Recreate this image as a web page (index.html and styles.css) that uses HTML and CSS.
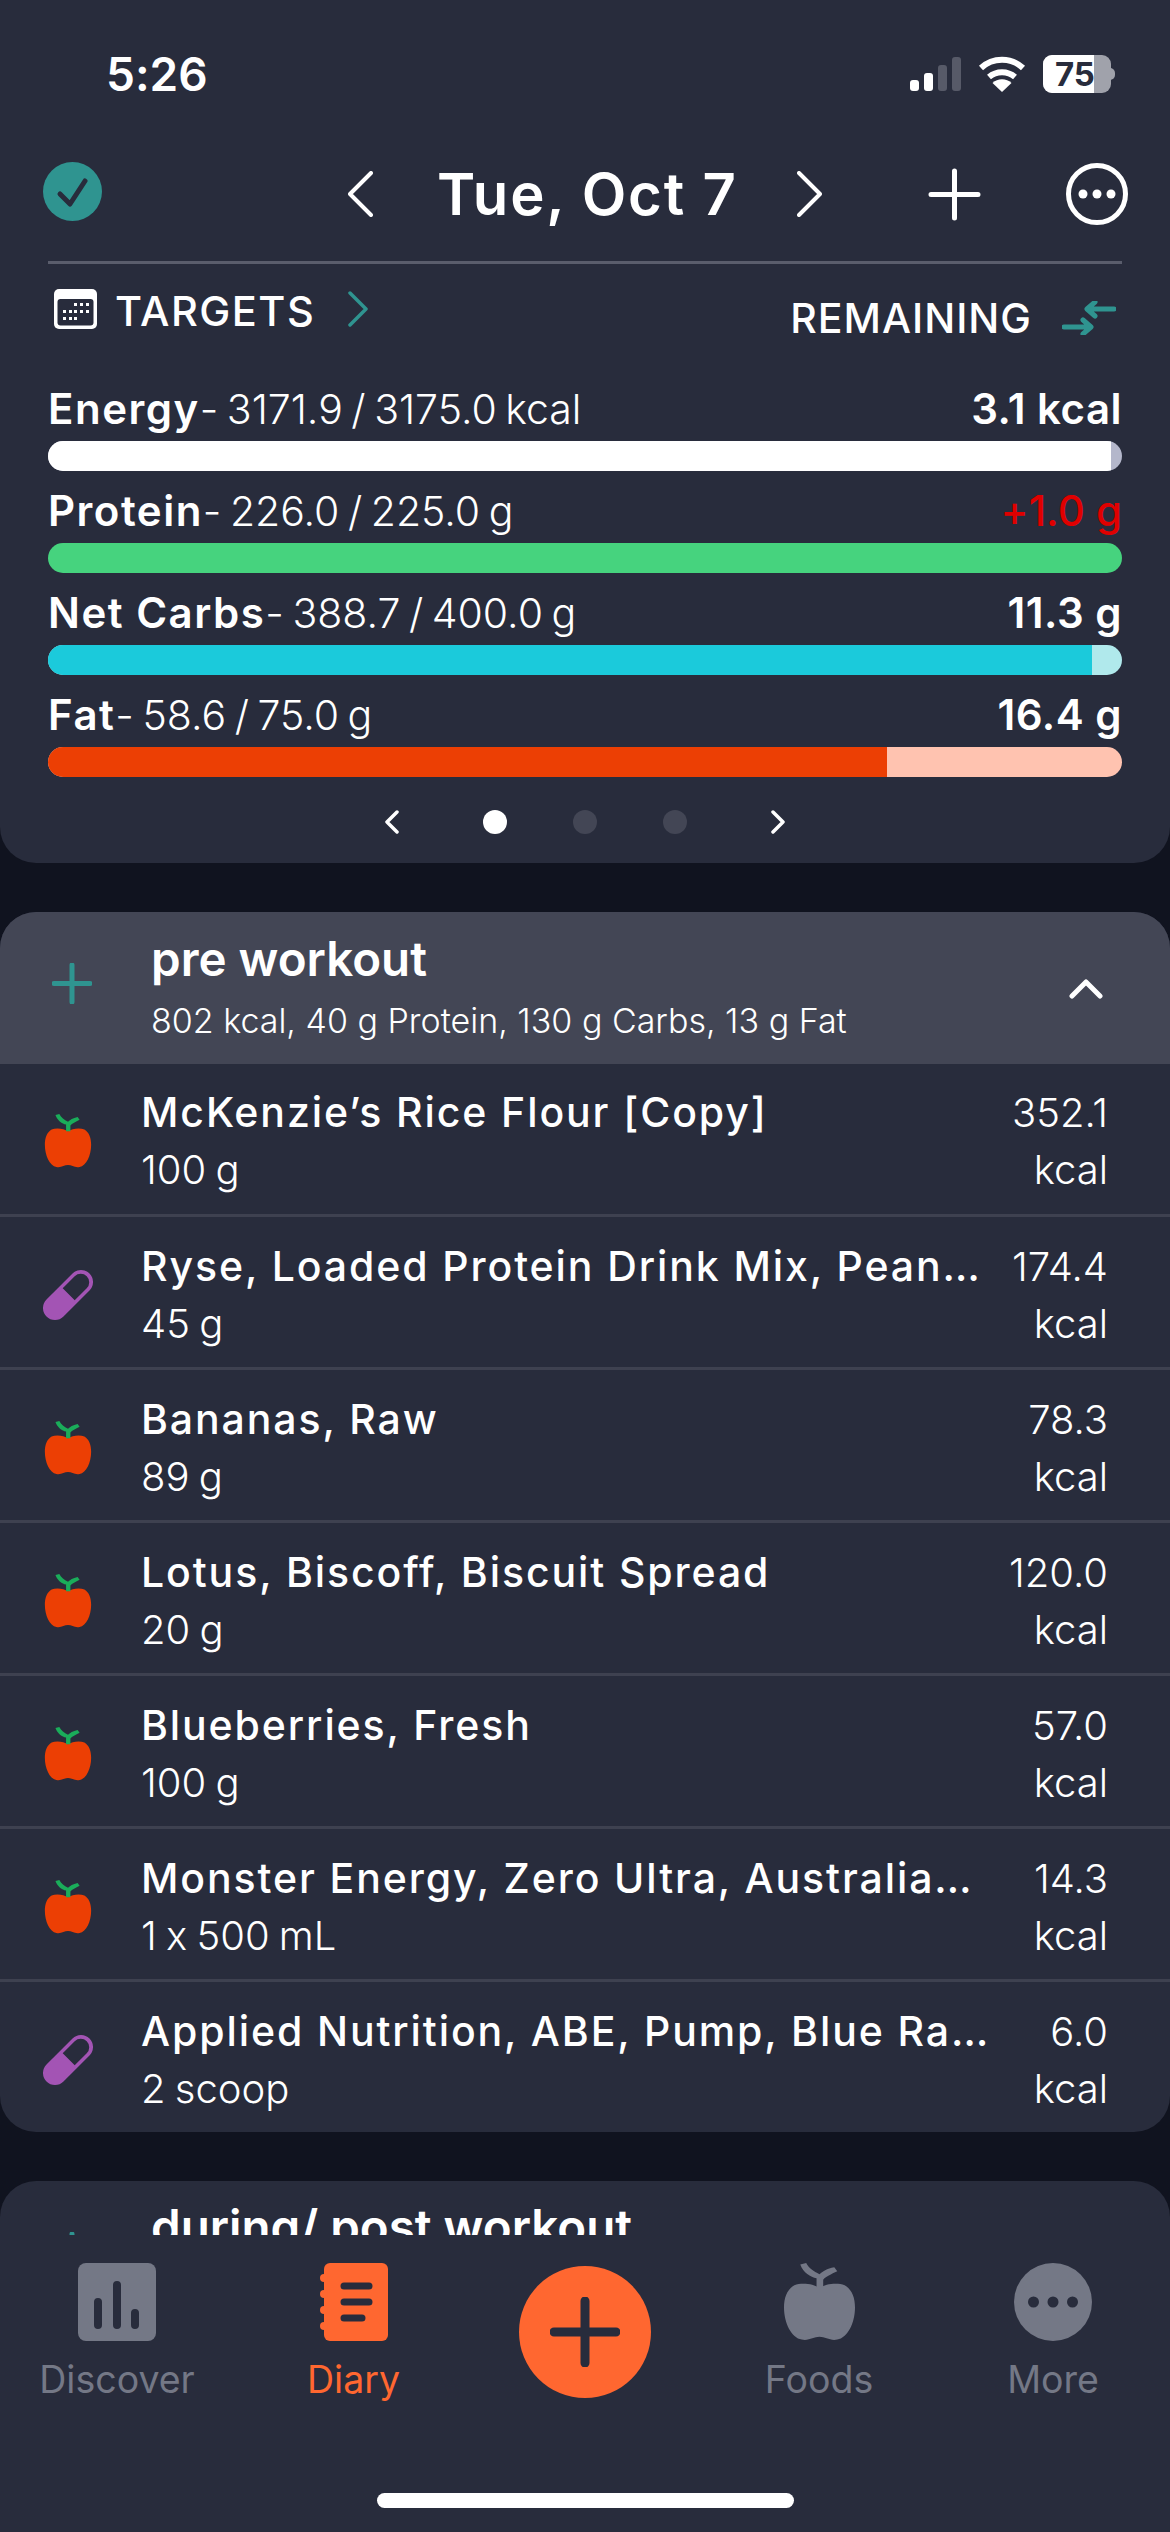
FILE: index.html
```html
<!DOCTYPE html>
<html lang="en">
<head>
    <meta charset="UTF-8">
    <meta name="viewport" content="width=device-width, initial-scale=1.0">
    <title>Diary</title>
    <link rel="stylesheet" href="styles.css">
</head>
<body>
    <svg class="defs" width="0" height="0">
        <symbol id="apple" viewBox="0 0 48 56">
            <path class="apple-body" d="M24 18C20 15 12 14 7 16C2 19 0 25 0 32C0 43 5 54 12 55C17 56 20 53 24 53C28 53 31 56 36 55C43 54 48 43 48 32C48 25 46 19 41 16C36 14 28 15 24 18Z"/>
            <path class="apple-leaf" d="M22 18L22 11C18 10 13 7 11 1L15 0C17 4 20 6 24 8C26 6 29 4 34 3L36 6C32 8 28 10 26.500 12L26.500 18Z"/>
        </symbol>
        <symbol id="pill" viewBox="0 0 50 50">
            <g transform="rotate(-45 25 25)">
                <rect x="-5.400" y="13" width="60.800" height="24" rx="12" fill="#a354b4"/>
                <path d="M26 16.500H43a8.500 8.500 0 0 1 0 17H26Z" fill="#282c3c"/>
            </g>
        </symbol>
    </svg>

    <div class="screen">
        <div class="top-card">
            <div class="status">
                <span class="clock">5:26</span>
                <div class="status-icons">
                    <svg width="51" height="34" viewBox="0 0 51 34">
                        <rect x="0" y="23" width="9" height="11" rx="3" fill="#fff"/>
                        <rect x="14" y="16" width="9" height="18" rx="3" fill="#fff"/>
                        <rect x="28" y="8" width="9" height="26" rx="3" fill="#575a68"/>
                        <rect x="42" y="0" width="9" height="34" rx="3" fill="#575a68"/>
                    </svg>
                    <svg class="wifi" width="48" height="36" viewBox="0 0 48 36">
                        <path d="M3 12A31 31 0 0 1 45 12M11 21A20 20 0 0 1 37 21" fill="none" stroke="#fff" stroke-width="6"/>
                        <path d="M24 36L14.500 27A14 14 0 0 1 33.500 27Z" fill="#fff"/>
                    </svg>
                    <div class="battery"><div class="battery-fill"></div><span class="battery-text">75</span></div>
                    <div class="battery-nub"></div>
                </div>
            </div>

            <div class="nav">
                <svg class="check" width="59" height="59" viewBox="0 0 59 59">
                    <circle cx="29.500" cy="29.500" r="29.500" fill="#2f9490"/>
                    <path d="M17 32L27 42L42 19" fill="none" stroke="#282c3c" stroke-width="5" stroke-linecap="round" stroke-linejoin="round"/>
                </svg>
                <svg class="chev-prev" width="25" height="46" viewBox="0 0 25 46">
                    <path d="M23 2L2 23L23 44" fill="none" stroke="#fff" stroke-width="4" stroke-linecap="round" stroke-linejoin="round"/>
                </svg>
                <span class="date">Tue, Oct 7</span>
                <svg class="chev-next" width="25" height="46" viewBox="0 0 25 46">
                    <path d="M2 2L23 23L2 44" fill="none" stroke="#fff" stroke-width="4" stroke-linecap="round" stroke-linejoin="round"/>
                </svg>
                <svg class="nav-plus" width="53" height="53" viewBox="0 0 53 53">
                    <path d="M26.500 3V50M3 26.500H50" stroke="#fff" stroke-width="5" stroke-linecap="round"/>
                </svg>
                <svg class="nav-more" width="62" height="62" viewBox="0 0 62 62">
                    <circle cx="31" cy="31" r="28.500" fill="none" stroke="#fff" stroke-width="5"/>
                    <circle cx="17" cy="31" r="4.500" fill="#fff"/>
                    <circle cx="31" cy="31" r="4.500" fill="#fff"/>
                    <circle cx="45" cy="31" r="4.500" fill="#fff"/>
                </svg>
            </div>

            <div class="divider"></div>

            <div class="targets">
                <div class="targets-left">
                    <svg width="43" height="40" viewBox="0 0 43 40">
                        <rect width="43" height="40" rx="5" fill="#fff"/>
                        <rect x="3.500" y="10" width="36" height="26.500" rx="3" fill="#282c3c"/>
                        <g fill="#fff">
                            <rect x="20" y="14" width="3" height="3"/><rect x="26" y="14" width="3" height="3"/><rect x="32" y="14" width="3" height="3"/>
                            <rect x="9" y="21" width="3" height="3"/><rect x="15" y="21" width="3" height="3"/><rect x="20" y="21" width="3" height="3"/><rect x="26" y="21" width="3" height="3"/><rect x="32" y="21" width="3" height="3"/>
                            <rect x="9" y="28" width="3" height="3"/><rect x="15" y="28" width="3" height="3"/><rect x="20" y="28" width="3" height="3"/>
                        </g>
                    </svg>
                    <span class="targets-title">TARGETS</span>
                    <svg class="targets-chev" width="20" height="36" viewBox="0 0 20 36">
                        <path d="M2 2L18 18L2 34" fill="none" stroke="#2f9490" stroke-width="3.500" stroke-linecap="round" stroke-linejoin="round"/>
                    </svg>
                </div>
                <div class="targets-right">
                    <span class="targets-title">REMAINING</span>
                    <svg width="54" height="34" viewBox="0 0 54 34">
                        <path d="M2 26H28M21 19L29 26L21 33" fill="none" stroke="#2f9490" stroke-width="5" stroke-linecap="round" stroke-linejoin="round"/>
                        <path d="M52 8H26M33 1L25 8L33 15" fill="none" stroke="#2f9490" stroke-width="5" stroke-linecap="round" stroke-linejoin="round"/>
                    </svg>
                </div>
            </div>

            <div class="macros">
                <div class="macro">
                    <div class="macro-label"><span><b>Energy</b>- 3171.9 / 3175.0 kcal</span><b class="macro-left">3.1 kcal</b></div>
                    <div class="bar track-energy"><div class="bar-fill fill-energy" style="width: 99%"></div></div>
                </div>
                <div class="macro">
                    <div class="macro-label"><span><b>Protein</b>- 226.0 / 225.0 g</span><span class="over">+1.0 g</span></div>
                    <div class="bar"><div class="bar-fill fill-protein" style="width: 100%"></div></div>
                </div>
                <div class="macro">
                    <div class="macro-label"><span><b>Net Carbs</b>- 388.7 / 400.0 g</span><b class="macro-left">11.3 g</b></div>
                    <div class="bar track-carbs"><div class="bar-fill fill-carbs" style="width: 97.2%"></div></div>
                </div>
                <div class="macro">
                    <div class="macro-label"><span><b>Fat</b>- 58.6 / 75.0 g</span><b class="macro-left">16.4 g</b></div>
                    <div class="bar track-fat"><div class="bar-fill fill-fat" style="width: 78.1%"></div></div>
                </div>
            </div>

            <div class="pager">
                <svg class="pager-prev" width="16" height="24" viewBox="0 0 16 24"><path d="M13 2L3 12L13 22" fill="none" stroke="#fff" stroke-width="3.500" stroke-linecap="round" stroke-linejoin="round"/></svg>
                <span class="dot dot-on"></span>
                <span class="dot"></span>
                <span class="dot"></span>
                <svg class="pager-next" width="16" height="24" viewBox="0 0 16 24"><path d="M3 2L13 12L3 22" fill="none" stroke="#fff" stroke-width="3.500" stroke-linecap="round" stroke-linejoin="round"/></svg>
            </div>
        </div>

        <div class="meal">
            <div class="meal-head">
                <svg class="meal-plus" width="40" height="41" viewBox="0 0 40 41"><path d="M20 2V39M2 20.500H38" stroke="#2f9490" stroke-width="5" stroke-linecap="round"/></svg>
                <div class="meal-info">
                    <div class="meal-title">pre workout</div>
                    <div class="meal-sub">802 kcal, 40 g Protein, 130 g Carbs, 13 g Fat</div>
                </div>
                <svg class="meal-chev" width="34" height="21" viewBox="0 0 34 21"><path d="M3 18L17 4L31 18" fill="none" stroke="#fff" stroke-width="5" stroke-linecap="round" stroke-linejoin="round"/></svg>
            </div>

            <div class="food">
                <svg class="food-icon"><use href="#apple"/></svg>
                <div class="food-info"><div class="food-name">McKenzie’s Rice Flour [Copy]</div><div class="food-qty">100 g</div></div>
                <div class="food-cal">352.1<br>kcal</div>
            </div>
            <div class="food">
                <svg class="food-icon"><use href="#pill"/></svg>
                <div class="food-info"><div class="food-name">Ryse, Loaded Protein Drink Mix, Pean…</div><div class="food-qty">45 g</div></div>
                <div class="food-cal">174.4<br>kcal</div>
            </div>
            <div class="food">
                <svg class="food-icon"><use href="#apple"/></svg>
                <div class="food-info"><div class="food-name">Bananas, Raw</div><div class="food-qty">89 g</div></div>
                <div class="food-cal">78.3<br>kcal</div>
            </div>
            <div class="food">
                <svg class="food-icon"><use href="#apple"/></svg>
                <div class="food-info"><div class="food-name">Lotus, Biscoff, Biscuit Spread</div><div class="food-qty">20 g</div></div>
                <div class="food-cal">120.0<br>kcal</div>
            </div>
            <div class="food">
                <svg class="food-icon"><use href="#apple"/></svg>
                <div class="food-info"><div class="food-name">Blueberries, Fresh</div><div class="food-qty">100 g</div></div>
                <div class="food-cal">57.0<br>kcal</div>
            </div>
            <div class="food">
                <svg class="food-icon"><use href="#apple"/></svg>
                <div class="food-info"><div class="food-name">Monster Energy, Zero Ultra, Australia…</div><div class="food-qty">1 x 500 mL</div></div>
                <div class="food-cal">14.3<br>kcal</div>
            </div>
            <div class="food">
                <svg class="food-icon"><use href="#pill"/></svg>
                <div class="food-info"><div class="food-name">Applied Nutrition, ABE, Pump, Blue Ra…</div><div class="food-qty">2 scoop</div></div>
                <div class="food-cal">6.0<br>kcal</div>
            </div>
        </div>

        <div class="meal meal-next">
            <div class="meal-head meal-head-plain">
                <svg class="meal-plus" width="40" height="41" viewBox="0 0 40 41"><path d="M20 2V39M2 20.500H38" stroke="#2f9490" stroke-width="5" stroke-linecap="round"/></svg>
                <div class="meal-info">
                    <div class="meal-title">during/ post workout</div>
                </div>
            </div>
        </div>

        <div class="tabbar">
            <div class="tabs">
                <div class="tab">
                    <svg width="78" height="78" viewBox="0 0 78 78">
                        <rect width="78" height="78" rx="8" fill="#747886"/>
                        <path d="M20 39V62M39 22V62M57 50V62" stroke="#282c3c" stroke-width="8" stroke-linecap="round"/>
                    </svg>
                    <span>Discover</span>
                </div>
                <div class="tab tab-on">
                    <svg width="68" height="78" viewBox="0 0 68 78">
                        <rect x="4" width="64" height="78" rx="6" fill="#ff6730"/>
                        <circle cx="4" cy="15" r="4" fill="#ff6730"/><circle cx="4" cy="31" r="4" fill="#ff6730"/><circle cx="4" cy="47" r="4" fill="#ff6730"/><circle cx="4" cy="63" r="4" fill="#ff6730"/>
                        <path d="M24 23H49M24 39H49M24 55H42" stroke="#282c3c" stroke-width="7" stroke-linecap="round"/>
                    </svg>
                    <span>Diary</span>
                </div>
                <div class="tab">
                    <div class="add-btn">
                        <svg width="70" height="70" viewBox="0 0 70 70"><path d="M35 4V66M4 35H66" stroke="#282c3c" stroke-width="9" stroke-linecap="round"/></svg>
                    </div>
                </div>
                <div class="tab tab-foods">
                    <svg width="71" height="78" viewBox="0 0 48 56" preserveAspectRatio="none"><use href="#apple" width="48" height="56"/></svg>
                    <span>Foods</span>
                </div>
                <div class="tab">
                    <svg width="78" height="78" viewBox="0 0 78 78">
                        <circle cx="39" cy="39" r="39" fill="#747886"/>
                        <circle cx="19.500" cy="39" r="5.500" fill="#282c3c"/><circle cx="39" cy="39" r="5.500" fill="#282c3c"/><circle cx="58.500" cy="39" r="5.500" fill="#282c3c"/>
                    </svg>
                    <span>More</span>
                </div>
            </div>
            <div class="home-bar"></div>
        </div>
    </div>
</body>
</html>
```

FILE: styles.css
```css
body {
    margin: 0;
    background-color: #10131f;
    font-family: Inter, "Liberation Sans", sans-serif;
    font-feature-settings: "calt" 0;
    color: #fff;
}
b {
    font-weight: 600;
}
.defs {
    position: absolute;
}
.screen {
    position: relative;
    width: 1170px;
    height: 2532px;
    overflow: hidden;
    background-color: #10131f;
}
.top-card {
    height: 863px;
    box-sizing: border-box;
    background-color: #282c3c;
    border-radius: 0 0 36px 36px;
    padding-top: 55px;
}
.status {
    display: flex;
    justify-content: space-between;
    height: 38px;
    padding: 0 55px 0 106px;
}
.clock {
    font-size: 46px;
    font-weight: 600;
    line-height: 38px;
}
.status-icons {
    display: flex;
    align-items: center;
    gap: 17px;
}
.battery {
    position: relative;
    width: 68px;
    height: 38px;
    margin-right: -15px;
    border-radius: 9px;
    background-color: #a0a2ab;
    overflow: hidden;
}
.battery-fill {
    width: 51px;
    height: 100%;
    background-color: #fff;
}
.battery-text {
    position: absolute;
    left: 12px;
    top: 0;
    font-size: 33px;
    font-weight: 700;
    line-height: 38px;
    color: #282c3c;
}
.battery-nub {
    width: 5px;
    height: 12px;
    margin-left: -3px;
    border-radius: 0 6px 6px 0;
    background-color: #a0a2ab;
}
.nav {
    display: flex;
    align-items: center;
    height: 62px;
    margin-top: 70px;
    padding-left: 43px;
}
.check {
    margin-top: -6px;
}
.chev-prev {
    margin-left: 246px;
}
.date {
    width: 296px;
    margin: 0 64px;
    font-size: 58px;
    font-weight: 600;
    letter-spacing: 1.8px;
    white-space: nowrap;
}
.nav-plus {
    margin-left: 106px;
}
.nav-more {
    margin-left: 85px;
}
.divider {
    height: 3px;
    margin: 36px 48px 0;
    background-color: #5a5d6c;
}
.targets {
    display: flex;
    justify-content: space-between;
    margin-top: 25px;
    padding: 0 54px;
}
.targets-left {
    display: flex;
    align-items: center;
    height: 40px;
}
.targets-title {
    font-size: 41.5px;
    font-weight: 500;
    letter-spacing: 1.5px;
    line-height: 40px;
}
.targets-left .targets-title {
    margin: 3px 0 0 18px;
}
.targets-right .targets-title {
    font-size: 41px;
    letter-spacing: 1px;
}
.targets-chev {
    margin-left: 33px;
}
.targets-right {
    display: flex;
    align-items: center;
    gap: 30px;
    margin-top: 9px;
}
.macros {
    margin-top: 31px;
    padding: 0 48px;
}
.macro {
    height: 102px;
}
.macro-label {
    display: flex;
    justify-content: space-between;
    height: 72px;
    font-size: 41px;
    font-weight: 300;
    word-spacing: -3px;
    line-height: 80px;
}
.macro-label b {
    font-size: 42px;
    font-weight: 600;
    letter-spacing: 1.5px;
    word-spacing: 0;
}
.macro-label .macro-left {
    letter-spacing: 0.5px;
    word-spacing: 0;
}
.over {
    color: #e00000;
    font-size: 42px;
    font-weight: 500;
    word-spacing: 0;
}
.bar {
    height: 30px;
    border-radius: 15px;
    overflow: hidden;
}
.bar-fill {
    height: 100%;
}
.track-energy {
    background-color: #b4b7cb;
}
.fill-energy {
    background-color: #fff;
}
.fill-protein {
    background-color: #46d37e;
}
.track-carbs {
    background-color: #b0e9ec;
}
.fill-carbs {
    background-color: #1bcadb;
}
.track-fat {
    background-color: #ffc3b0;
}
.fill-fat {
    background-color: #ec3f04;
}
.pager {
    display: flex;
    align-items: center;
    justify-content: center;
    gap: 66px;
    margin-top: 33px;
}
.pager-prev {
    margin-right: 17px;
}
.pager-next {
    margin-left: 17px;
}
.dot {
    width: 24px;
    height: 24px;
    border-radius: 50%;
    background-color: #434655;
}
.dot-on {
    background-color: #fff;
}
.meal {
    margin-top: 49px;
    border-radius: 36px;
    background-color: #282c3c;
    overflow: hidden;
}
.meal-head {
    display: flex;
    align-items: center;
    height: 152px;
    padding: 0 67px 0 52px;
    background-color: #434655;
}
.meal-head-plain {
    align-items: flex-start;
    box-sizing: border-box;
    padding-top: 18px;
    background-color: #282c3c;
}
.meal-plus {
    flex-shrink: 0;
    margin-top: -9px;
}
.meal-head-plain .meal-plus {
    margin-top: 33px;
}
.meal-info {
    flex: 1;
    margin-left: 59px;
}
.meal-title {
    font-size: 47.5px;
    font-weight: 600;
    line-height: 56px;
    margin-top: -5px;
}
.meal-head-plain .meal-title {
    margin-top: 0;
}
.meal-sub {
    margin-top: 14px;
    font-size: 34px;
    font-weight: 300;
    line-height: 40px;
}
.food {
    display: flex;
    align-items: center;
    height: 153px;
    box-sizing: border-box;
    padding: 6px 62px 0 43px;
    border-top: 3px solid #3e4150;
}
.meal-head + .food {
    height: 150px;
    padding-top: 3px;
    border-top: none;
}
.food-icon {
    flex-shrink: 0;
    width: 50px;
    height: 54px;
}
.food-info {
    flex: 1;
    margin-left: 48px;
}
.food-name {
    font-size: 41px;
    font-weight: 500;
    letter-spacing: 1.9px;
    line-height: 57px;
    white-space: nowrap;
}
.food-qty {
    font-size: 40px;
    font-weight: 300;
    word-spacing: -2px;
    line-height: 57px;
}
.food-cal {
    font-size: 40px;
    font-weight: 300;
    line-height: 57px;
    text-align: right;
}
.apple-body {
    fill: var(--apple-body, #ec3f04);
}
.apple-leaf {
    fill: var(--apple-leaf, #1aad5a);
}
/* bar sits over the scrolling meals */
.tabbar {
    position: absolute;
    left: 0;
    right: 0;
    bottom: 0;
    height: 297px;
    background-color: #282c3c;
}
.tabs {
    display: grid;
    grid-template-columns: repeat(5, 234px);
    padding-top: 28px;
}
.tab {
    display: flex;
    flex-direction: column;
    align-items: center;
    font-size: 37.5px;
    color: #747886;
}
.tab span {
    margin-top: 17px;
    line-height: 44px;
}
.tab-on {
    padding-left: 5px;
    color: #ff6730;
}
.tab-foods {
    --apple-body: #747886;
    --apple-leaf: #747886;
}
.add-btn {
    display: flex;
    align-items: center;
    justify-content: center;
    width: 132px;
    height: 132px;
    margin-top: 3px;
    border-radius: 50%;
    background-color: #ff6730;
}
.home-bar {
    position: absolute;
    left: 377px;
    bottom: 24px;
    width: 417px;
    height: 15px;
    border-radius: 8px;
    background-color: #fff;
}
```
